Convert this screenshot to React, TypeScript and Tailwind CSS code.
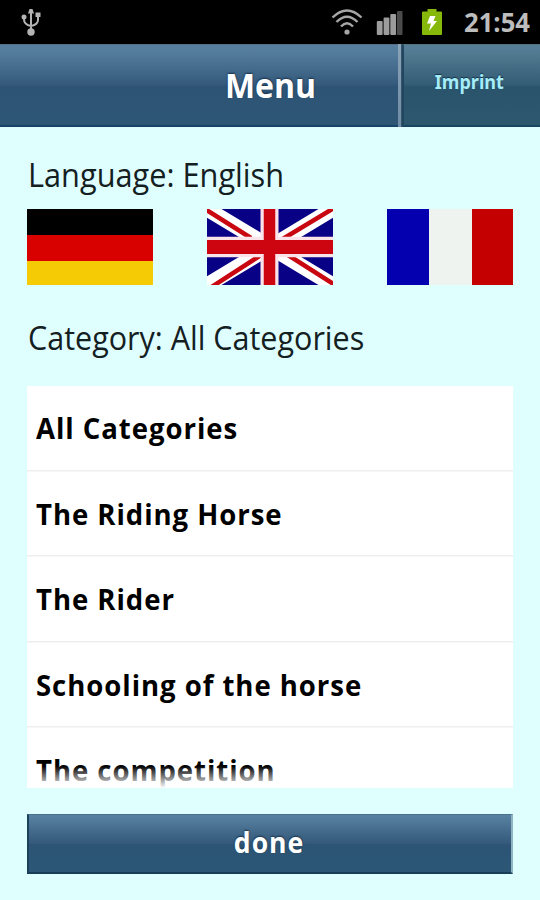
import React from "react";

const categories = [
  "All Categories",
  "The Riding Horse",
  "The Rider",
  "Schooling of the horse",
  "The competition",
];

const StatusBar = () => {
  return (
    <div className="h-11 shrink-0 bg-black flex items-center justify-between pl-[21px] pr-[10px]">
      <svg width="21" height="30" viewBox="0 0 21 30" fill="none" stroke="#b4b4b4" strokeWidth="2">
        <path d="M10 4V26M3 10v2.500q0 5 7 6.500M17 8v5q0 4.500-7 6" />
        <path d="M7 6.500L8.500 2h3L13 6.500z" fill="#b4b4b4" stroke="none" />
        <circle cx="3" cy="10" r="2.500" fill="#b4b4b4" stroke="none" />
        <path d="M14.500 5.500h5v4.500h-5z" fill="#b4b4b4" stroke="none" />
        <circle cx="10" cy="25" r="3.700" fill="#b4b4b4" stroke="none" />
      </svg>
      <div className="flex items-center">
        <svg width="32" height="28" viewBox="0 0 32 28" fill="none" stroke="#a6a6a6" strokeWidth="2.400">
          <path d="M1.500 9.500Q16 -4.500 30.500 9.500" />
          <path d="M5.500 14Q16 3.500 26.500 14" />
          <path d="M10 18.500Q16 12 22 18.500" />
          <circle cx="16" cy="24" r="2.600" fill="#a6a6a6" stroke="none" />
        </svg>
        <svg className="ml-[13px]" width="28" height="28" viewBox="0 0 28 28" fill="#9c9c9c">
          <rect x="0.800" y="13" width="5.800" height="14" rx="1" />
          <rect x="7.600" y="9.500" width="5.800" height="17.500" rx="1" />
          <rect x="14.300" y="6" width="5.800" height="21" rx="1" />
          <rect x="21" y="3" width="5.500" height="24" rx="1" fill="#4b4b4b" />
        </svg>
        <svg className="ml-[18px]" width="20" height="28" viewBox="0 0 20 28">
          <path d="M5.500 1h9v2.500H19a1 1 0 0 1 1 1V26a1 1 0 0 1-1 1H1a1 1 0 0 1-1-1V4.500a1 1 0 0 1 1-1h4.500z" fill="#85b80b" />
          <path d="M8 8h5.500l-2 5h3.500L7 23l2-7.500H5z" fill="#fff" />
        </svg>
        <span className="ml-[22px] w-[66px] text-[27px] leading-[44px] font-bold text-[#bdbdbd] whitespace-nowrap">
          <span className="inline-block origin-left scale-x-[0.95]">21:54</span>
        </span>
      </div>
    </div>
  );
};

const Header = () => {
  return (
    <div className="h-[83px] shrink-0 flex text-white font-bold">
      <div className="flex-1 pl-[142px] flex items-center justify-center border-t border-b-2 border-t-[#526f87] border-b-[#164467] bg-[linear-gradient(#587f9f,#527a9b_12%,#34597b_50%,#2d5475_52%,#2e5675)]">
        <h1 className="text-[34px] [text-shadow:0_-1px_2px_#17324c]">
          <span className="inline-block scale-x-[0.94]">Menu</span>
        </h1>
      </div>
      <div className="w-1 bg-[linear-gradient(#8ba3b6,#6f8da6)] border-r border-[#36566d]" />
      <button className="w-[138px] pb-[6px] pr-[5px] border-l-2 border-l-[#224660] border-t border-t-[#50717f] border-b-2 border-b-[#164660] bg-[linear-gradient(#587f98,#50788f_12%,#335d75_50%,#2a536c_52%,#2c586e)] font-['Noto_Sans',sans-serif] text-[19px] text-[#a5edf8] [text-shadow:0_-1px_1px_#17324c]">
        <span className="inline-block scale-x-[0.95]">Imprint</span>
      </button>
    </div>
  );
};

const GermanFlag = () => (
  <svg width="126" height="76" viewBox="0 0 126 76">
    <path d="M0 0h126v26H0z" fill="#000" />
    <path d="M0 26h126v26H0z" fill="#d90000" />
    <path d="M0 52h126v24H0z" fill="#f5cb05" />
  </svg>
);

const BritishFlag = () => (
  <svg width="126" height="76" viewBox="0 0 126 76">
    <path d="M0 0h126v76H0z" fill="#080085" />
    <path d="M0 0L126 76M126 0L0 76" stroke="#fff" strokeWidth="15" />
    <path d="M-2 0L44 29M127 -1L74 31M54 46L3 79M81 46L128 76" stroke="#c80710" strokeWidth="4.500" />
    <path d="M62.500 0v76" stroke="#fbe3ea" strokeWidth="18" />
    <path d="M0 38h126" stroke="#fbe3ea" strokeWidth="20.500" />
    <path d="M62.500 0v76" stroke="#cc0510" strokeWidth="11.500" />
    <path d="M0 38h126" stroke="#cc0510" strokeWidth="14" />
  </svg>
);

const FrenchFlag = () => (
  <svg width="126" height="76" viewBox="0 0 126 76">
    <path d="M0 0h42v76H0z" fill="#0400b0" />
    <path d="M42 0h43v76H42z" fill="#eff3f0" />
    <path d="M85 0h41v76H85z" fill="#c40000" />
  </svg>
);

const App = () => {
  return (
    <div className="w-[540px] h-[900px] overflow-hidden flex flex-col bg-[#dfffff] text-black font-['Open_Sans',sans-serif]">
      <StatusBar />
      <Header />
      <div className="flex flex-col px-[27px] pt-[25px]">
        <p className="h-[57px] pl-px text-[32px] leading-[46px] text-[#14201f] whitespace-nowrap">
          <span className="inline-block origin-left scale-x-[0.96]">Language: English</span>
        </p>
        <div className="flex justify-between">
          <GermanFlag />
          <BritishFlag />
          <FrenchFlag />
        </div>
        <p className="mt-[30px] h-[71px] pl-px text-[32px] leading-[46px] text-[#14201f] whitespace-nowrap">
          <span className="inline-block origin-left scale-x-[0.953]">Category: All Categories</span>
        </p>
        <div className="relative h-[402px] overflow-hidden bg-white">
          {categories.map((category) => (
            <div
              key={category}
              className="h-[85.500px] last:h-[60px] pl-[9px] text-[29px] leading-[84px] last:leading-[84px] font-bold whitespace-nowrap bg-[linear-gradient(#eeeeee,#eeeeee)] bg-[length:100%_1.500px] bg-[position:0_83.500px] bg-no-repeat"
            >
              <span className="inline-block origin-left scale-x-[0.95] tracking-[1px]">{category}</span>
            </div>
          ))}
          <div className="absolute inset-x-0 bottom-0 h-[22px] bg-linear-to-b from-white/0 to-white" />
        </div>
        <button className="mt-[26px] h-[60px] pb-[4px] pr-[2px] border-t border-x-2 border-b-2 border-t-[#49718c] border-l-[#1c4259] border-r-[#91b4c3] border-b-[#173e56] bg-[linear-gradient(#5982a1,#34597b_50%,#2d5475_52%,#2b5775)] text-[28px] leading-none font-bold text-white [text-shadow:0_-1px_2px_#17324c]">
          <span className="inline-block scale-x-[0.95] tracking-[1px]">done</span>
        </button>
      </div>
    </div>
  );
};

export default App;
